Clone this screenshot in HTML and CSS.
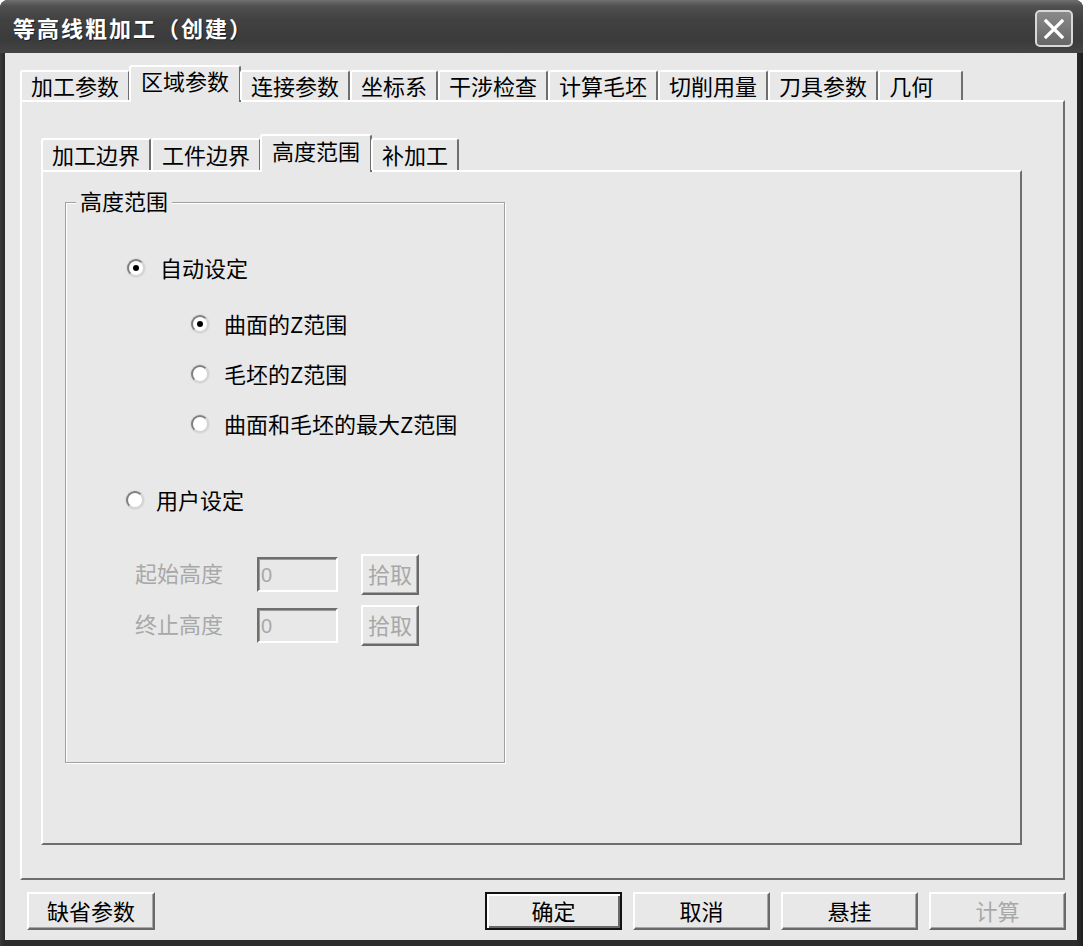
FILE: index.html
```html
<!DOCTYPE html>
<html lang="zh-CN">
<head>
    <meta charset="UTF-8">
    <title>等高线粗加工（创建）</title>
    <link rel="stylesheet" href="styles.css">
</head>
<body>
    <div class="window">
        <div class="titlebar">
            <span class="title">等高线粗加工（创建）</span>
            <span class="close-btn">
                <svg width="22" height="22" viewBox="0 0 22 22">
                    <path d="M3 3 L19 19 M19 3 L3 19" stroke="#fff" stroke-width="3.2" stroke-linecap="square"/>
                </svg>
            </span>
        </div>

        <div class="client">
            <div class="tabs outer-tabs">
                <span class="tab">加工参数</span>
                <span class="tab active">区域参数</span>
                <span class="tab">连接参数</span>
                <span class="tab">坐标系</span>
                <span class="tab">干涉检查</span>
                <span class="tab">计算毛坯</span>
                <span class="tab">切削用量</span>
                <span class="tab">刀具参数</span>
                <span class="tab wide">几何</span>
            </div>

            <div class="panel outer-panel">
                <div class="tabs inner-tabs">
                    <span class="tab">加工边界</span>
                    <span class="tab">工件边界</span>
                    <span class="tab active">高度范围</span>
                    <span class="tab">补加工</span>
                </div>

                <div class="panel inner-panel">
                    <div class="group">
                        <span class="group-title">高度范围</span>

                        <div class="opt first"><span class="radio checked"></span>自动设定</div>
                        <div class="opt sub sub-first"><span class="radio checked"></span>曲面的Z范围</div>
                        <div class="opt sub"><span class="radio"></span>毛坯的Z范围</div>
                        <div class="opt sub"><span class="radio"></span>曲面和毛坯的最大Z范围</div>
                        <div class="opt user"><span class="radio"></span>用户设定</div>

                        <div class="field-row first-field">
                            <span class="field-label">起始高度</span>
                            <span class="field">0</span>
                            <span class="btn pick">拾取</span>
                        </div>
                        <div class="field-row">
                            <span class="field-label">终止高度</span>
                            <span class="field">0</span>
                            <span class="btn pick">拾取</span>
                        </div>
                    </div>
                </div>
            </div>

            <div class="bottom-bar">
                <span class="btn defaults">缺省参数</span>
                <div class="actions">
                    <span class="btn default-btn">确定</span>
                    <span class="btn">取消</span>
                    <span class="btn">悬挂</span>
                    <span class="btn disabled">计算</span>
                </div>
            </div>
        </div>
    </div>
</body>
</html>
```

FILE: styles.css
```css
html, body {
    margin: 0;
    background-color: #fff;
}
body {
    font-family: "Noto Sans CJK SC", "Noto Sans", sans-serif;
    font-size: 22px;
    color: #000;
}
.window {
    width: 1083px;
    height: 946px;
    display: flex;
    flex-direction: column;
    background: linear-gradient(90deg, #3a3a3a, #2c2c2c 4px, #2c2c2c calc(100% - 6px), #1e1e1e);
    border-radius: 8px 8px 0 0;
    overflow: hidden;
}
.titlebar {
    height: 53px;
    flex: none;
    display: flex;
    align-items: center;
    justify-content: space-between;
    padding: 0 10px 0 13px;
    background: linear-gradient(#707070 0, #505050 6px, #414141 20px, #3b3b3b 40px, #444 53px);
}
.title {
    color: #fff;
    font-weight: bold;
    letter-spacing: 2px;
    line-height: 30px;
    text-shadow: 1px 1px 0 #222;
}
.close-btn {
    width: 38px;
    height: 37px;
    box-sizing: border-box;
    margin-top: 4px;
    border: 2px solid #d8d8d8;
    border-radius: 5px;
    background: linear-gradient(#8a8a8a, #666);
    display: flex;
    align-items: center;
    justify-content: center;
}
.client {
    flex: 1;
    margin: 0 6px 6px 5px;
    padding: 12px 12px 0 15px;
    background-color: #e8e8e8;
}

/* tabs */
.tabs {
    display: flex;
    align-items: flex-end;
    position: relative;
    z-index: 1;
}
.outer-tabs {
    height: 35px;
}
.inner-tabs {
    height: 36px;
}
.tab {
    box-sizing: border-box;
    height: 30px;
    padding: 0 9px 3px 9px;
    display: flex;
    align-items: center;
    border-top: 2px solid #fff;
    border-left: 2px solid #fff;
    border-right: 2px solid #6e6e6e;
    border-radius: 3px 3px 0 0;
    background-color: #e8e8e8;
    line-height: 26px;
    white-space: nowrap;
}
.inner-tabs .tab {
    height: 32px;
}
.tab.active {
    height: 37px;
    margin: 0 -1px -2px -1px;
    padding: 0 10px 9px 10px;
}
.inner-tabs .tab.active {
    height: 38px;
}
.tab.wide {
    width: 85px;
}

/* panels */
.panel {
    box-sizing: border-box;
    border: 2px solid;
    border-color: #fff #6e6e6e #6e6e6e #fff;
    background-color: #e8e8e8;
}
.outer-panel {
    width: 1045px;
    height: 780px;
    padding: 32px 0 0 19px;
}
.inner-panel {
    width: 981px;
    height: 675px;
    padding: 30px 0 0 22px;
}

/* group box */
.group {
    position: relative;
    box-sizing: border-box;
    width: 440px;
    height: 561px;
    padding-left: 61px;
    border: 1px solid #a0a0a0;
    box-shadow: 1px 1px 0 #fff, inset 1px 1px 0 #fff;
}
.group-title {
    position: absolute;
    top: -17px;
    left: 10px;
    padding: 0 4px;
    line-height: 28px;
    background-color: #e8e8e8;
}
.opt {
    height: 30px;
    display: flex;
    align-items: center;
    gap: 15px;
    line-height: 26px;
}
.opt.first {
    margin-top: 49px;
}
.opt.sub {
    margin-left: 64px;
    margin-top: 20px;
}
.opt.sub-first {
    margin-top: 26px;
}
.opt.user {
    margin-top: 46px;
    margin-left: -1px;
    gap: 12px;
}
.radio {
    position: relative;
    flex: none;
    width: 18px;
    height: 18px;
    margin-top: 2px;
    box-sizing: border-box;
    border-radius: 50%;
    border: 2px solid;
    border-color: #808080 #d4d4d4 #d4d4d4 #808080;
    box-shadow: 0 0 0 1px #dcdcdc;
    background-color: #fff;
}
.radio.checked::after {
    content: "";
    position: absolute;
    left: 4px;
    top: 4px;
    width: 6px;
    height: 6px;
    border-radius: 50%;
    background-color: #000;
}

/* disabled fields */
.field-row {
    height: 41px;
    display: flex;
    align-items: center;
    margin-left: 8px;
    margin-top: 10px;
}
.field-row.first-field {
    margin-top: 40px;
}
.field-label {
    width: 122px;
    padding-bottom: 6px;
    color: #a8a8a8;
}
.field {
    box-sizing: border-box;
    width: 81px;
    height: 35px;
    padding-left: 2px;
    border: 2px solid;
    border-color: #6e6e6e #fff #fff #6e6e6e;
    box-shadow: inset 1px 1px 0 #999;
    font-family: "Liberation Sans", sans-serif;
    font-size: 20px;
    line-height: 33px;
    color: #a8a8a8;
}

/* buttons */
.btn {
    box-sizing: border-box;
    width: 137px;
    height: 38px;
    padding-bottom: 3px;
    display: flex;
    align-items: center;
    justify-content: center;
    border: 2px solid;
    border-color: #fff #6a6a6a #6a6a6a #fff;
    box-shadow: inset -1px -1px 0 #a6a6a6;
    background-color: #e8e8e8;
    line-height: 28px;
}
.btn.pick {
    width: 58px;
    height: 41px;
    margin-left: 23px;
    color: #a8a8a8;
}
.btn.defaults {
    width: 128px;
    margin-left: 7px;
}
.btn.default-btn {
    border-color: #111;
    box-shadow: inset 2px 2px 0 #fff, inset -2px -2px 0 #6a6a6a;
}
.btn.disabled {
    color: #a8a8a8;
}
.bottom-bar {
    display: flex;
    align-items: center;
    margin-top: 12px;
}
.actions {
    display: flex;
    gap: 11px;
    margin-left: auto;
    margin-right: -1px;
}
```
